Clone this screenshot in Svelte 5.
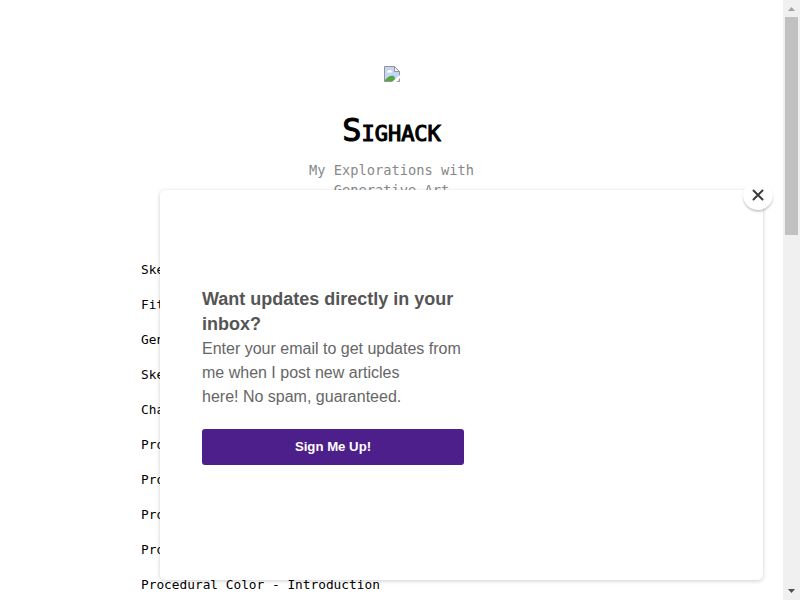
<script>
  let open = $state(true)

  const posts = [
    'Sketching',
    'Fitting',
    'Generative',
    'Sketches',
    'Chaos',
    'Procedural',
    'Procedural',
    'Procedural',
    'Procedural',
    'Procedural Color - Introduction'
  ]
</script>

<div class="window">
  <main class="page">
    <header>
      <svg class="logo" width="16" height="16" viewBox="0 0 16 16" aria-label="Sighack">
        <path d="M.5.5h10l5 5v10H.5z" fill="#c4d6f6" stroke="#959595" />
        <path d="M3 6.500V5h1V4h3v1h1v1.500z" fill="#fff" />
        <path d="M1 15v-1c3-4 6-5 9-4l2 5z" fill="#55a743" />
        <path d="M8 16l8-7v3l-3.500 4z" fill="#fff" />
        <path d="M10.500.5v5h5z" fill="#f4f4f4" stroke="#959595" />
      </svg>
      <h1>Sighack</h1>
      <p>My Explorations with Generative Art</p>
    </header>
    <ul class="posts">
      {#each posts as post, i (i)}
        <li>{post}</li>
      {/each}
    </ul>
  </main>

  <div class="scrollbar">
    <svg width="17" height="17" viewBox="0 0 17 17"><path d="M5 11h7L8.500 7z" fill="#a3a3a3" /></svg>
    <div class="thumb"></div>
    <svg class="down" width="17" height="17" viewBox="0 0 17 17"><path d="M5 6h7L8.500 10z" fill="#505050" /></svg>
  </div>

  {#if open}
    <div class="modal" role="dialog">
      <button class="close" aria-label="Close" onclick={() => (open = false)}>
        <svg width="12" height="12" viewBox="0 0 12 12">
          <path d="M1.500 1.500l9 9M10.500 1.500l-9 9" stroke="#3c3c3c" stroke-width="2" stroke-linecap="round" />
        </svg>
      </button>
      <div class="content">
        <h2>Want updates directly in your inbox?</h2>
        <p>Enter your email to get updates from<br />me when I post new articles<br />here! No spam, guaranteed.</p>
        <button class="signup">Sign Me Up!</button>
      </div>
    </div>
  {/if}
</div>

<style>
  :global(body) {
    background: #fff;
    overflow: hidden;
  }

  .window {
    position: relative;
    display: flex;
    width: 800px;
    height: 600px;
    overflow: hidden;
    font-family: Consolas, 'DejaVu Sans Mono', monospace;
  }

  .page {
    flex: 1;
    padding: 66px 141px 0;
  }

  header {
    display: flex;
    flex-direction: column;
    align-items: center;
    height: 186px;
    text-align: center;
  }

  .logo {
    flex: none;
  }

  h1 {
    margin: 28px 0 0;
    font-size: 32px;
    font-weight: 400;
    line-height: 40px;
    font-variant: small-caps;
    color: #000;
    -webkit-text-stroke: 1.1px #000;
  }

  header p {
    width: 180px;
    margin: 10px 0 0;
    font-size: 13.7px;
    line-height: 20px;
    color: #888;
  }

  .posts {
    margin: 0;
    padding: 0;
    list-style: none;
  }

  .posts li {
    height: 35px;
    font-size: 12.8px;
    line-height: 35px;
    white-space: nowrap;
    color: #000;
  }

  .scrollbar {
    display: flex;
    flex-direction: column;
    width: 17px;
    background: #f0f0f0;
  }

  .scrollbar svg {
    flex: none;
  }

  .thumb {
    height: 218px;
    margin: 0 2px;
    background: #c1c1c1;
  }

  .down {
    margin-top: auto;
  }

  .modal {
    position: absolute;
    top: 190px;
    left: 160px;
    box-sizing: border-box;
    width: 603px;
    height: 390px;
    padding: 97px 42px 0;
    border-radius: 5px;
    background: #fff;
    box-shadow: 0 1px 4px rgba(0, 0, 0, 0.2);
    font-family: Arial, 'Liberation Sans', sans-serif;
  }

  .close {
    position: absolute;
    top: -10px;
    right: -10px;
    display: flex;
    align-items: center;
    justify-content: center;
    width: 30px;
    height: 30px;
    padding: 0;
    border: 0;
    border-radius: 50%;
    background: #fff;
    box-shadow: 0 2px 2px rgba(0, 0, 0, 0.2);
  }

  .content {
    width: 262px;
  }

  h2 {
    margin: 0;
    font-size: 18px;
    line-height: 25px;
    color: #555;
  }

  .content p {
    margin: 0;
    font-size: 16px;
    line-height: 24px;
    color: #666;
  }

  .signup {
    width: 262px;
    height: 36px;
    margin: 20px 0 0;
    padding: 0 0 2px;
    border: 0;
    border-radius: 3px;
    background: #4d1f8a;
    color: #fff;
    font: bold 13.2px Arial, 'Liberation Sans', sans-serif;
  }
</style>
